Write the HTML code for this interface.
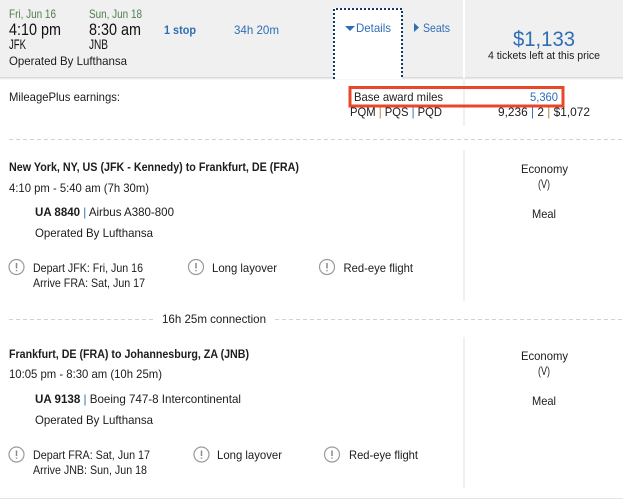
<!DOCTYPE html>
<html><head><meta charset="utf-8"><style>
html,body{margin:0;padding:0;background:#fff}
svg{display:block}
text{font-family:"Liberation Sans",sans-serif;font-size:12px;fill:#1c1c1c}
.b{font-weight:bold}
.g{fill:#4f7d4f;font-size:12px}
.t{font-size:17px;fill:#111}
.a{font-size:14px;fill:#111}
.l{fill:#2f6db5}
.p{fill:#b5813f}
</style></head><body>
<svg width="623" height="499" viewBox="0 0 623 499" xmlns="http://www.w3.org/2000/svg">
<defs><linearGradient id="s" x1="0" y1="0" x2="0" y2="1"><stop offset="0" stop-color="#d4d4d4"/><stop offset="1" stop-color="#fff"/></linearGradient></defs>
<rect width="623" height="77" fill="#f0f0f0"/>
<rect y="77" width="623" height="3" fill="url(#s)"/>
<rect x="463" y="0" width="2" height="78" fill="#fff"/>
<rect x="463" y="80" width="2" height="46" fill="#f0f0f0"/>
<rect x="333" y="8" width="69" height="71" fill="#fff"/>
<path d="M334 79V9H402V79" fill="none" stroke="#12395f" stroke-width="2" stroke-dasharray="2 2"/>

<text lengthAdjust="spacingAndGlyphs" class="g" x="9" y="18" textLength="47">Fri, Jun 16</text>
<text lengthAdjust="spacingAndGlyphs" class="g" x="89" y="18" textLength="53">Sun, Jun 18</text>
<text lengthAdjust="spacingAndGlyphs" class="t" x="9" y="35" textLength="52">4:10 pm</text>
<text lengthAdjust="spacingAndGlyphs" class="t" x="89" y="35" textLength="52">8:30 am</text>
<text lengthAdjust="spacingAndGlyphs" class="a" x="9" y="49" textLength="17">JFK</text>
<text lengthAdjust="spacingAndGlyphs" class="a" x="89" y="49" textLength="19">JNB</text>
<text lengthAdjust="spacingAndGlyphs" x="9" y="65" textLength="118">Operated By Lufthansa</text>
<text lengthAdjust="spacingAndGlyphs" class="l b" x="164" y="34" textLength="32">1 stop</text>
<text lengthAdjust="spacingAndGlyphs" class="l" x="234" y="34" textLength="45">34h 20m</text>
<path d="M345 26H355L350 31Z" fill="#2f6db5"/>
<text lengthAdjust="spacingAndGlyphs" class="l" x="356" y="32" textLength="35">Details</text>
<path d="M414 23L419 27.5L414 32Z" fill="#2f6db5"/>
<text lengthAdjust="spacingAndGlyphs" class="l" x="423" y="32" textLength="27">Seats</text>
<text lengthAdjust="spacingAndGlyphs" class="l" x="513" y="46" textLength="62" style="font-size:21px">$1,133</text>
<text lengthAdjust="spacingAndGlyphs" x="488" y="59" textLength="112" style="font-size:11px">4 tickets left at this price</text>

<text lengthAdjust="spacingAndGlyphs" x="9" y="101" textLength="111">MileagePlus earnings:</text>
<rect x="350" y="87.5" width="213" height="18.5" fill="none" stroke="#e8472a" stroke-width="3"/>
<text lengthAdjust="spacingAndGlyphs" x="354" y="101" textLength="89">Base award miles</text>
<text lengthAdjust="spacingAndGlyphs" class="l" x="530" y="101" textLength="28">5,360</text>
<text lengthAdjust="spacingAndGlyphs" x="350" y="116" textLength="92">PQM <tspan class="p">|</tspan> PQS <tspan class="l">|</tspan> PQD</text>
<text lengthAdjust="spacingAndGlyphs" x="498" y="116" textLength="92">9,236 <tspan class="l">|</tspan> 2 <tspan class="p">|</tspan> $1,072</text>

<path d="M9 139.5H623" stroke="#d2d2d2" stroke-dasharray="4 3"/>
<rect x="463" y="150" width="2" height="151" fill="#f0f0f0"/>
<text lengthAdjust="spacingAndGlyphs" class="b" x="9" y="171" textLength="290">New York, NY, US (JFK - Kennedy) to Frankfurt, DE (FRA)</text>
<text lengthAdjust="spacingAndGlyphs" x="9" y="192" textLength="140">4:10 pm - 5:40 am (7h 30m)</text>
<text lengthAdjust="spacingAndGlyphs" x="35" y="216" textLength="139"><tspan class="b">UA 8840</tspan> <tspan class="l">|</tspan> Airbus A380-800</text>
<text lengthAdjust="spacingAndGlyphs" x="35" y="237" textLength="118">Operated By Lufthansa</text>
<g fill="none" stroke="#9a9a9a" stroke-width="1.2">
<circle cx="16.5" cy="267" r="7.500"/><circle cx="196" cy="267" r="7.500"/><circle cx="327" cy="267" r="7.500"/>
<circle cx="16.5" cy="454.5" r="7.500"/><circle cx="201.5" cy="454.5" r="7.500"/><circle cx="332" cy="454.5" r="7.500"/>
</g>
<g stroke="#8a8a8a" stroke-width="1.5">
<path d="M16.5 263V268.5M16.5 270V271.3M196 263V268.5M196 270V271.3M327 263V268.5M327 270V271.3"/>
<path d="M16.5 450.5V456M16.5 457.5V458.8M201.5 450.5V456M201.5 457.5V458.8M332 450.5V456M332 457.5V458.8"/>
</g>
<text lengthAdjust="spacingAndGlyphs" x="33" y="272" textLength="110">Depart JFK: Fri, Jun 16</text>
<text lengthAdjust="spacingAndGlyphs" x="33" y="287" textLength="112">Arrive FRA: Sat, Jun 17</text>
<text lengthAdjust="spacingAndGlyphs" x="212" y="272" textLength="65">Long layover</text>
<text lengthAdjust="spacingAndGlyphs" x="343.500" y="272" textLength="69.500">Red-eye flight</text>
<text lengthAdjust="spacingAndGlyphs" x="521" y="173" textLength="47">Economy</text>
<text lengthAdjust="spacingAndGlyphs" x="538" y="188" textLength="12">(V)</text>
<text lengthAdjust="spacingAndGlyphs" x="532" y="218" textLength="24">Meal</text>

<path d="M9 319.500H153M275 319.500H623" stroke="#d2d2d2" stroke-dasharray="4 3"/>
<text lengthAdjust="spacingAndGlyphs" x="162" y="323" textLength="104">16h 25m connection</text>

<rect x="463" y="337" width="2" height="151" fill="#f0f0f0"/>
<text lengthAdjust="spacingAndGlyphs" class="b" x="9" y="358" textLength="240">Frankfurt, DE (FRA) to Johannesburg, ZA (JNB)</text>
<text lengthAdjust="spacingAndGlyphs" x="9" y="378" textLength="153">10:05 pm - 8:30 am (10h 25m)</text>
<text lengthAdjust="spacingAndGlyphs" x="35" y="403" textLength="206"><tspan class="b">UA 9138</tspan> <tspan class="l">|</tspan> Boeing 747-8 Intercontinental</text>
<text lengthAdjust="spacingAndGlyphs" x="35" y="424" textLength="118">Operated By Lufthansa</text>
<text lengthAdjust="spacingAndGlyphs" x="33" y="459" textLength="117">Depart FRA: Sat, Jun 17</text>
<text lengthAdjust="spacingAndGlyphs" x="33" y="474" textLength="114">Arrive JNB: Sun, Jun 18</text>
<text lengthAdjust="spacingAndGlyphs" x="217" y="459" textLength="65">Long layover</text>
<text lengthAdjust="spacingAndGlyphs" x="349" y="459" textLength="69">Red-eye flight</text>
<text lengthAdjust="spacingAndGlyphs" x="521" y="360" textLength="47">Economy</text>
<text lengthAdjust="spacingAndGlyphs" x="538" y="375" textLength="12">(V)</text>
<text lengthAdjust="spacingAndGlyphs" x="532" y="405" textLength="24">Meal</text>
<rect y="498" width="623" height="1" fill="#e4e4e4"/>
</svg>
</body></html>
